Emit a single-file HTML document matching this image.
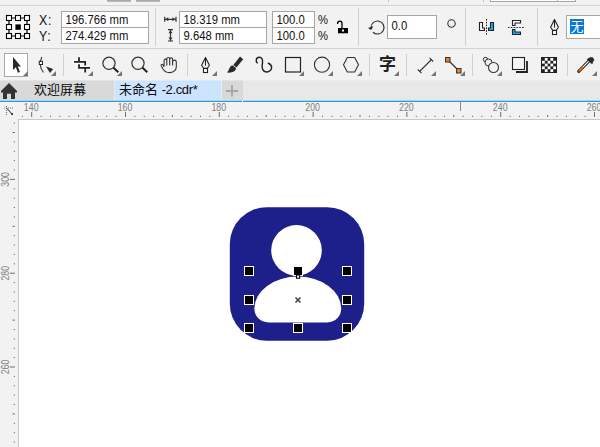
<!DOCTYPE html>
<html lang="zh">
<head>
<meta charset="utf-8">
<title>CorelDRAW</title>
<style>
html,body{margin:0;padding:0;}
body{width:600px;height:447px;overflow:hidden;background:#f2f2f2;position:relative;
 font-family:"Liberation Sans","Noto Sans CJK SC",sans-serif;font-size:11.3px;color:#111;}
.abs{position:absolute;}
.hline{position:absolute;left:0;width:600px;height:1px;background:#d2d2d2;}
.vsep{position:absolute;width:1px;background:#d0d0d0;}
.inp{position:absolute;background:#fff;border:1px solid #a6a6a6;box-sizing:border-box;}
.txt{position:absolute;white-space:nowrap;line-height:1;}
.t{transform:scaleY(1.15);transform-origin:0 84.6%;}
.tri{position:absolute;width:0;height:0;margin:-1px 0 0 -1px;border-left:5px solid transparent;border-bottom:5px solid #757575;}
svg{position:absolute;overflow:visible;}
</style>
</head>
<body>

<!-- top strip remnants -->
<div class="abs" style="left:107px;top:0;width:24px;height:2px;background:linear-gradient(#ababab 0,#ababab 60%,#d0d0d0 100%);"></div>
<div class="abs" style="left:136px;top:0;width:24px;height:2px;background:linear-gradient(#ababab 0,#ababab 60%,#d0d0d0 100%);"></div>
<div class="abs" style="left:490px;top:0;width:86px;height:2px;background:#fff;border:1px solid #a6a6a6;border-top:none;box-sizing:border-box;"></div>
<div class="abs" style="left:557px;top:0;width:1px;height:2px;background:#b0b0b0;"></div>
<div class="abs" style="left:388px;top:0;width:1px;height:2px;background:#c0c0c0;"></div>
<div class="abs" style="left:483px;top:0;width:1px;height:2px;background:#c0c0c0;"></div>
<div class="hline" style="top:5px;"></div>

<!-- property bar -->
<svg style="left:5px;top:14px;" width="26" height="26" viewBox="0 0 26 26">
 <rect x="1" y="1" width="24" height="24" fill="#fafafa"/>
 <path d="M7 4H10M16 4H19M7 22H10M16 22H19M4 7V10M4 16V19M22 7V10M22 16V19" stroke="#000" stroke-width="1.2" fill="none"/>
 <g fill="#fff" stroke="#000" stroke-width="1.1">
  <rect x="1.5" y="1.5" width="5" height="5"/><rect x="10.5" y="1.5" width="5" height="5"/><rect x="19.5" y="1.5" width="5" height="5"/>
  <rect x="1.5" y="10.5" width="5" height="5"/><rect x="19.5" y="10.5" width="5" height="5"/>
  <rect x="1.5" y="19.5" width="5" height="5"/><rect x="10.5" y="19.5" width="5" height="5"/><rect x="19.5" y="19.5" width="5" height="5"/>
 </g>
 <rect x="10.4" y="10.4" width="5.4" height="5.4" fill="#000"/>
</svg>
<div class="txt t" style="left:39px;top:14.5px;font-size:12.3px;letter-spacing:0.8px;">X:</div>
<div class="txt t" style="left:39px;top:30.5px;font-size:12.3px;letter-spacing:0.8px;">Y:</div>
<div class="inp" style="left:61px;top:11px;width:88px;height:33px;"></div>
<div class="abs" style="left:61px;top:27px;width:88px;height:1px;background:#a6a6a6;"></div>
<div class="txt t" style="left:65.5px;top:15.4px;">196.766 mm</div>
<div class="txt t" style="left:65.5px;top:31.4px;">274.429 mm</div>
<div class="vsep" style="left:155px;top:8px;height:38px;"></div>

<svg style="left:164px;top:16px;" width="14" height="7" viewBox="0 0 14 7">
 <path d="M0.7 0.8V5.8M12 0.8V5.8M1 3.3H12" stroke="#333" stroke-width="1.2" fill="none"/>
 <path d="M1.3 3.3L4.3 1.3V5.3ZM11.4 3.3L8.4 1.3V5.3Z" fill="#333"/>
</svg>
<svg style="left:166px;top:29px;" width="9" height="14" viewBox="0 0 9 14">
 <path d="M2 0.6H7M2 12H7M4.5 1V12" stroke="#333" stroke-width="1.2" fill="none"/>
 <path d="M4.5 1.2L2.5 4.2H6.5ZM4.5 11.4L2.5 8.4H6.5Z" fill="#333"/>
</svg>
<div class="inp" style="left:179px;top:11px;width:88px;height:33px;"></div>
<div class="abs" style="left:179px;top:27px;width:88px;height:1px;background:#a6a6a6;"></div>
<div class="txt t" style="left:183.5px;top:15.4px;">18.319 mm</div>
<div class="txt t" style="left:183.5px;top:31.4px;">9.648 mm</div>

<div class="inp" style="left:272px;top:11px;width:43px;height:33px;"></div>
<div class="abs" style="left:272px;top:27px;width:43px;height:1px;background:#a6a6a6;"></div>
<div class="txt t" style="left:276.5px;top:15.4px;">100.0</div>
<div class="txt t" style="left:276.5px;top:31.4px;">100.0</div>
<div class="txt t" style="left:318px;top:15.4px;">%</div>
<div class="txt t" style="left:318px;top:31.4px;">%</div>
<svg style="left:336px;top:20px;" width="13" height="14" viewBox="0 0 13 14">
 <path d="M1.6 4V3.4A2.2 2.2 0 0 1 6 3.4V8" stroke="#000" stroke-width="1.3" fill="none"/>
 <rect x="2" y="8" width="10" height="5.3" fill="#000"/>
 <rect x="6" y="9.5" width="2" height="2" fill="#fff"/>
</svg>
<div class="vsep" style="left:358px;top:8px;height:38px;"></div>

<svg style="left:368px;top:18px;" width="18" height="18" viewBox="0 0 18 18">
 <path d="M3 9.5A6.5 6.5 0 1 1 5 14.2" stroke="#333" stroke-width="1.2" fill="none"/>
 <path d="M0 10L5.3 8.3L3.2 12Z" fill="#222"/>
</svg>
<div class="inp" style="left:387px;top:15px;width:50px;height:24px;"></div>
<div class="txt t" style="left:391.5px;top:21.4px;">0.0</div>
<svg style="left:446px;top:18px;" width="11" height="11" viewBox="0 0 11 11"><circle cx="5.5" cy="5.5" r="3.7" fill="none" stroke="#333" stroke-width="1.1"/></svg>
<div class="vsep" style="left:465px;top:8px;height:38px;"></div>

<!-- mirror H -->
<svg style="left:478px;top:18px;" width="18" height="18" viewBox="0 0 18 18">
 <path d="M1.5 4.5H4.5V10H6.5V12.5H1.5Z" fill="#fff" stroke="#222" stroke-width="1.1"/>
 <path d="M15.5 4.5H12.5V10H10.5V12.5H15.5Z" fill="#1eaaf0" stroke="#222" stroke-width="1.1"/>
 <path d="M8.5 1V17" stroke="#222" stroke-width="1" stroke-dasharray="1.6 1.2"/>
</svg>
<!-- mirror V -->
<svg style="left:507px;top:19px;" width="18" height="18" viewBox="0 0 18 18">
 <path d="M5.5 1.5H13.5V4H8V6.5H5.5Z" fill="#fff" stroke="#222" stroke-width="1.1"/>
 <path d="M5.5 15.5H13.5V13H8V10.5H5.5Z" fill="#1eaaf0" stroke="#222" stroke-width="1.1"/>
 <path d="M1 8.5H17" stroke="#222" stroke-width="1" stroke-dasharray="1.6 1.2"/>
</svg>
<div class="vsep" style="left:537px;top:8px;height:38px;"></div>
<!-- pen nib -->
<svg style="left:549px;top:18px;" width="12" height="18" viewBox="0 0 12 18">
 <path d="M5.5 1.4L1.6 9.3L3.6 12.3H7.4L9.4 9.3Z" fill="#f4f4f4" stroke="#222" stroke-width="1.1" stroke-linejoin="round"/>
 <path d="M5.5 1.5V9.6" stroke="#222" stroke-width="1.1"/>
 <rect x="3.5" y="12.5" width="4" height="4" fill="#fff" stroke="#222" stroke-width="1.1"/>
</svg>
<div class="inp" style="left:566px;top:15px;width:40px;height:24px;"></div>
<div class="abs" style="left:570px;top:19px;width:14px;height:15px;background:#0a78d7;"></div>
<div class="txt" style="left:570.5px;top:20px;font-size:13px;color:#fff;">无</div>

<div class="hline" style="top:48px;"></div>

<!-- toolbox -->
<div class="abs" style="left:4px;top:53px;width:24px;height:24px;background:#fff;border:1px solid #a8a8a8;box-sizing:border-box;"></div>
<svg style="left:12px;top:57px;" width="11" height="17" viewBox="0 0 11 17">
 <path d="M1 0V13L3.8 10.3L6 15.8L8 14.9L5.8 9.6H9Z" fill="#2a2a2a"/>
</svg>
<div class="tri" style="left:23.5px;top:72px;"></div>

<!-- shape tool -->
<svg style="left:37px;top:56px;" width="20" height="21" viewBox="0 0 20 21">
 <path d="M4.8 1C2.5 6 3 12 6.5 16.5" stroke="#333" stroke-width="1.1" fill="none"/>
 <rect x="2.3" y="5.3" width="3.2" height="3.2" fill="#fff" stroke="#222" stroke-width="1"/>
 <path d="M9 10.5L16.2 13L13 17Z" fill="#2a2a2a"/>
</svg>
<div class="tri" style="left:52px;top:72px;"></div>
<div class="vsep" style="left:63px;top:54px;height:22px;"></div>

<!-- crop -->
<svg style="left:73px;top:56px;" width="19" height="18" viewBox="0 0 19 18">
 <path d="M6 1.2V5.9M1 5.9H13.1M12.2 5.9V9.6" stroke="#fafafa" stroke-width="3.6" fill="none" stroke-linecap="square"/>
 <path d="M6 1.2V5.9M1 5.9H13.1M12.2 5.9V9.6" stroke="#222" stroke-width="1.8" fill="none"/>
 <path d="M6 8.3V11.8M5.1 11.8H17M12.2 11.8V16.6" stroke="#fafafa" stroke-width="3.6" fill="none"/>
 <path d="M6 8.3V11.8M5.1 11.8H17M12.2 11.8V16.6" stroke="#222" stroke-width="1.8" fill="none"/>
</svg>
<div class="tri" style="left:89px;top:72px;"></div>

<!-- zoom 1 -->
<svg style="left:101px;top:55px;" width="20" height="20" viewBox="0 0 20 20">
 <circle cx="8" cy="8.3" r="6.1" fill="none" stroke="#333" stroke-width="1.2"/>
 <path d="M12.5 12.8L17.3 17.3" stroke="#222" stroke-width="2"/>
</svg>
<div class="tri" style="left:117.6px;top:72px;"></div>
<!-- zoom 2 -->
<svg style="left:130px;top:55px;" width="20" height="20" viewBox="0 0 20 20">
 <circle cx="8" cy="8.3" r="6.1" fill="none" stroke="#333" stroke-width="1.2"/>
 <path d="M12.5 12.8L17.3 17.3" stroke="#222" stroke-width="2"/>
</svg>
<!-- hand -->
<svg style="left:160px;top:57px;" width="18" height="17" viewBox="0 0 18 17">
 <path d="M4.1 9.8V3.5A1.35 1.35 0 0 1 6.8 3.5V8.5M6.8 3.5V2A1.45 1.45 0 0 1 9.7 2V8.5M9.7 2.3A1.45 1.45 0 0 1 12.6 2.3V8.5M12.6 5A1.85 1.85 0 0 1 16.3 5V10C16.3 13.5 13 15.6 9.3 15.6C6 15.6 4.3 14 3 12L1.3 9C0.6 7.6 2 6.6 3 7.8L4.1 9.8" fill="none" stroke="#333" stroke-width="1.1" stroke-linejoin="round"/>
</svg>
<div class="vsep" style="left:187px;top:54px;height:22px;"></div>

<!-- pen -->
<svg style="left:200px;top:56px;" width="12" height="18" viewBox="0 0 12 18">
 <path d="M5.5 1.4L1.6 9.3L3.6 12.3H7.4L9.4 9.3Z" fill="#f4f4f4" stroke="#222" stroke-width="1.1" stroke-linejoin="round"/>
 <path d="M5.5 1.5V9.6" stroke="#222" stroke-width="1.1"/>
 <rect x="3.5" y="12.5" width="4" height="4" fill="#fff" stroke="#222" stroke-width="1.1"/>
</svg>
<div class="tri" style="left:213px;top:72px;"></div>
<!-- brush -->
<svg style="left:226px;top:56px;" width="18" height="18" viewBox="0 0 18 18">
 <path d="M7.4 8.9L14 0.6L17.2 3.2L10.5 11.5Z" fill="#2a2a2a"/>
 <path d="M7 9.6L9.9 12.1C10.3 15.2 6.5 17.2 0.8 16.6C3 15.4 2.8 12.4 4.2 10.8C5.2 9.6 6.3 9.3 7 9.6Z" fill="#2a2a2a"/>
</svg>
<!-- smart draw hook -->
<svg style="left:255px;top:56px;" width="19" height="19" viewBox="0 0 19 19">
 <path d="M2.3 6.8C0.5 5.5 0.8 1.2 4.3 1.2C7 1.2 7.8 3.5 7.5 7C7.2 9.5 6.5 11 7.6 13.2C8.8 15.6 10.5 16 11.8 16C14.5 16 16.6 13.8 16.6 11.4C16.6 9.5 15.2 8 13.3 7.3" fill="none" stroke="#222" stroke-width="1.45" stroke-linecap="round"/>
</svg>
<!-- rectangle -->
<svg style="left:284px;top:56px;" width="18" height="17" viewBox="0 0 18 17"><rect x="1.5" y="1.5" width="15" height="14.5" fill="none" stroke="#222" stroke-width="1.2"/></svg>
<div class="tri" style="left:300px;top:72px;"></div>
<!-- ellipse -->
<svg style="left:313px;top:56px;" width="18" height="18" viewBox="0 0 18 18"><circle cx="9" cy="8.7" r="7.6" fill="none" stroke="#333" stroke-width="1.1"/></svg>
<div class="tri" style="left:329px;top:72px;"></div>
<!-- polygon -->
<svg style="left:342px;top:56px;" width="18" height="18" viewBox="0 0 18 18"><path d="M1.5 8.7L5.3 1.5H12.7L16.5 8.7L12.7 16H5.3Z" fill="none" stroke="#333" stroke-width="1.1"/></svg>
<div class="tri" style="left:358px;top:72px;"></div>
<div class="vsep" style="left:369px;top:54px;height:22px;"></div>
<!-- text -->
<div class="txt" style="left:379px;top:56px;font-size:17px;font-weight:700;color:#222;">字</div>
<div class="tri" style="left:395px;top:72px;"></div>
<div class="vsep" style="left:406px;top:54px;height:22px;"></div>
<!-- dimension -->
<svg style="left:416.5px;top:56.5px;" width="18" height="18" viewBox="0 0 18 18">
 <path d="M2.5 14.5L14.5 2.5" stroke="#333" stroke-width="1.1"/>
 <path d="M0.8 12.5L4.5 16.2M12.5 0.8L16.2 4.5" stroke="#333" stroke-width="1.1"/>
</svg>
<div class="tri" style="left:432px;top:72px;"></div>
<!-- connector -->
<svg style="left:444.2px;top:55.6px;" width="19" height="19" viewBox="0 0 19 19">
 <path d="M4 4L14.5 14.5" stroke="#333" stroke-width="1.2"/>
 <rect x="1.5" y="1.5" width="4.5" height="4.5" fill="#f57c14" stroke="#333" stroke-width="1"/>
 <rect x="12.5" y="12.5" width="4.5" height="4.5" fill="#f57c14" stroke="#333" stroke-width="1"/>
</svg>
<div class="tri" style="left:461px;top:72px;"></div>
<div class="vsep" style="left:472px;top:54px;height:22px;"></div>
<!-- blend -->
<svg style="left:482px;top:56px;" width="20" height="19" viewBox="0 0 20 19">
 <circle cx="3.5" cy="3.5" r="2.2" fill="#f4f4f4" stroke="#333" stroke-width="1"/>
 <circle cx="6.5" cy="6.5" r="3.5" fill="#f4f4f4" stroke="#333" stroke-width="1"/>
 <circle cx="11.5" cy="11.5" r="5" fill="#f4f4f4" stroke="#333" stroke-width="1.1"/>
</svg>
<div class="tri" style="left:498px;top:72px;"></div>
<!-- drop shadow -->
<svg style="left:511px;top:56px;" width="19" height="19" viewBox="0 0 19 19">
 <path d="M16 5V16H5" stroke="#222" stroke-width="1.8" fill="none"/>
 <rect x="1.5" y="1.5" width="12" height="12" fill="#f6f6f6" stroke="#222" stroke-width="1.1"/>
</svg>
<!-- transparency checker -->
<svg style="left:541px;top:57px;" width="16" height="16" viewBox="0 0 16 16">
 <rect x="0" y="0" width="16" height="16" fill="#222"/>
 <g fill="#fff"><rect x="3.8" y="1.0" width="2.8" height="2.8"/><rect x="9.4" y="1.0" width="2.8" height="2.8"/><rect x="1.0" y="3.8" width="2.8" height="2.8"/><rect x="6.6" y="3.8" width="2.8" height="2.8"/><rect x="12.2" y="3.8" width="2.8" height="2.8"/><rect x="3.8" y="6.6" width="2.8" height="2.8"/><rect x="9.4" y="6.6" width="2.8" height="2.8"/><rect x="1.0" y="9.4" width="2.8" height="2.8"/><rect x="6.6" y="9.4" width="2.8" height="2.8"/><rect x="12.2" y="9.4" width="2.8" height="2.8"/><rect x="3.8" y="12.2" width="2.8" height="2.8"/><rect x="9.4" y="12.2" width="2.8" height="2.8"/></g>
</svg>
<div class="vsep" style="left:567px;top:54px;height:22px;"></div>
<!-- eyedropper -->
<svg style="left:576px;top:56px;" width="20" height="19" viewBox="0 0 20 19">
 <path d="M2.7 15.3L12.8 5.2" stroke="#222" stroke-width="3.1" stroke-linecap="round"/>
 <path d="M3.6 14.4L12.8 5.2" stroke="#fff" stroke-width="1.1"/>
 <path d="M3 15L6.8 11.2" stroke="#f26a0e" stroke-width="1.5" stroke-linecap="round"/>
 <path d="M11 3.5L11.8 2.6L14.8 1.2L16.6 1.4L17.9 3.2V4.8L16.8 5.7V7.2L15.8 8Z" fill="#2a2a2a" stroke="#2a2a2a" stroke-width="0.3" stroke-linejoin="round"/>
</svg>
<div class="tri" style="left:593px;top:72px;"></div>

<!-- tab bar -->
<div class="abs" style="left:0;top:80px;width:600px;height:21px;background:#e8e8e8;"></div>
<div class="abs" style="left:0;top:80px;width:114px;height:21px;background:#d9d9d9;"></div>
<svg style="left:1px;top:82.8px;" width="16" height="16" viewBox="0 0 16 16">
 <path d="M8 0L0 8V9.4H2V16H6V10.7H10V16H14V9.4H16V8Z" fill="#333"/>
</svg>
<div class="txt" style="left:34px;top:83.4px;font-size:13px;color:#0a0a0a;">欢迎屏幕</div>
<div class="abs" style="left:114px;top:80px;width:107px;height:21px;background:#cde4fe;"></div>
<div class="txt" style="left:119px;top:83.4px;font-size:13px;color:#0a0a0a;">未命名 <span style="letter-spacing:-0.36px;">-2.cdr*</span></div>
<div class="abs" style="left:222px;top:80px;width:21px;height:21px;background:#d9d9d9;"></div>
<div class="abs" style="left:242px;top:100px;width:1px;height:2px;background:#e8f2fa;z-index:2;"></div>
<svg style="left:226px;top:85px;" width="12" height="12" viewBox="0 0 12 12"><path d="M6 0V11.5M0 6H12" stroke="#a6a6a6" stroke-width="1.9"/></svg>
<div class="abs" style="left:0;top:80px;width:600px;height:1px;background:#f0f0f0;opacity:0.5;"></div>
<div class="abs" style="left:114px;top:81px;width:1px;height:19px;background:#e6ecf2;"></div>
<div class="abs" style="left:221px;top:81px;width:1px;height:19px;background:#e6ecf2;"></div>
<div class="abs" style="left:0;top:100px;width:600px;height:2px;background:linear-gradient(#b4d2e8 0,#b4d2e8 50%,#1e9ee8 50%,#1e9ee8 100%);"></div>

<!-- rulers + canvas -->
<div class="abs" style="left:0;top:102px;width:600px;height:345px;background:#f2f2f2;"></div>
<div class="abs" style="left:18px;top:119px;width:582px;height:328px;background:#fff;border-left:1px solid #c8c8c8;border-top:1px solid #c8c8c8;box-sizing:border-box;"></div>
<svg id="rulers" style="left:0;top:102px;" width="600" height="345" viewBox="0 0 600 345">
<path d="M22.3 13.799999999999997V15M31.7 10V15M41.1 13.799999999999997V15M50.5 13.799999999999997V15M59.8 13.799999999999997V15M69.2 13.799999999999997V15M78.6 12.799999999999997V15M88.0 13.799999999999997V15M97.4 13.799999999999997V15M106.7 13.799999999999997V15M116.1 13.799999999999997V15M125.5 10V15M134.9 13.799999999999997V15M144.3 13.799999999999997V15M153.6 13.799999999999997V15M163.0 13.799999999999997V15M172.4 12.799999999999997V15M181.8 13.799999999999997V15M191.2 13.799999999999997V15M200.5 13.799999999999997V15M209.9 13.799999999999997V15M219.3 10V15M228.7 13.799999999999997V15M238.1 13.799999999999997V15M247.4 13.799999999999997V15M256.8 13.799999999999997V15M266.2 12.799999999999997V15M275.6 13.799999999999997V15M285.0 13.799999999999997V15M294.3 13.799999999999997V15M303.7 13.799999999999997V15M313.1 10V15M322.5 13.799999999999997V15M331.9 13.799999999999997V15M341.2 13.799999999999997V15M350.6 13.799999999999997V15M360.0 12.799999999999997V15M369.4 13.799999999999997V15M378.8 13.799999999999997V15M388.1 13.799999999999997V15M397.5 13.799999999999997V15M406.9 10V15M416.3 13.799999999999997V15M425.7 13.799999999999997V15M435.0 13.799999999999997V15M444.4 13.799999999999997V15M453.8 12.799999999999997V15M463.2 13.799999999999997V15M472.6 13.799999999999997V15M481.9 13.799999999999997V15M491.3 13.799999999999997V15M500.7 10V15M510.1 13.799999999999997V15M519.5 13.799999999999997V15M528.8 13.799999999999997V15M538.2 13.799999999999997V15M547.6 12.799999999999997V15M557.0 13.799999999999997V15M566.4 13.799999999999997V15M575.7 13.799999999999997V15M585.1 13.799999999999997V15M594.5 10V15" stroke="#6e6e6e" stroke-width="1" fill="none"/>
<text transform="translate(31.2 8.8) scale(1 1.14)" font-size="8.8" fill="#808080" text-anchor="middle" font-family="Liberation Sans, sans-serif">140</text>
<text transform="translate(125.0 8.8) scale(1 1.14)" font-size="8.8" fill="#808080" text-anchor="middle" font-family="Liberation Sans, sans-serif">160</text>
<text transform="translate(218.8 8.8) scale(1 1.14)" font-size="8.8" fill="#808080" text-anchor="middle" font-family="Liberation Sans, sans-serif">180</text>
<text transform="translate(312.6 8.8) scale(1 1.14)" font-size="8.8" fill="#808080" text-anchor="middle" font-family="Liberation Sans, sans-serif">200</text>
<text transform="translate(406.4 8.8) scale(1 1.14)" font-size="8.8" fill="#808080" text-anchor="middle" font-family="Liberation Sans, sans-serif">220</text>
<text transform="translate(500.2 8.8) scale(1 1.14)" font-size="8.8" fill="#808080" text-anchor="middle" font-family="Liberation Sans, sans-serif">240</text>
<text transform="translate(594.0 8.8) scale(1 1.14)" font-size="8.8" fill="#808080" text-anchor="middle" font-family="Liberation Sans, sans-serif">260</text>
<path d="M13.8 340.0H15M13.8 330.7H15M13.8 321.3H15M12.5 311.9H15M13.8 302.5H15M13.8 293.1H15M13.8 283.8H15M13.8 274.4H15M10 265.0H15M13.8 255.6H15M13.8 246.2H15M13.8 236.9H15M13.8 227.5H15M12.5 218.1H15M13.8 208.7H15M13.8 199.3H15M13.8 190.0H15M13.8 180.6H15M10 171.2H15M13.8 161.8H15M13.8 152.4H15M13.8 143.1H15M13.8 133.7H15M12.5 124.3H15M13.8 114.9H15M13.8 105.5H15M13.8 96.2H15M13.8 86.8H15M10 77.4H15M13.8 68.0H15M13.8 58.6H15M13.8 49.3H15M13.8 39.9H15M12.5 30.5H15M13.8 21.1H15" stroke="#6e6e6e" stroke-width="1" fill="none"/>
<text transform="translate(9 265.0) rotate(-90) scale(1 1.14)" font-size="8.8" fill="#808080" text-anchor="middle" font-family="Liberation Sans, sans-serif">260</text>
<text transform="translate(9 171.2) rotate(-90) scale(1 1.14)" font-size="8.8" fill="#808080" text-anchor="middle" font-family="Liberation Sans, sans-serif">280</text>
<text transform="translate(9 77.4) rotate(-90) scale(1 1.14)" font-size="8.8" fill="#808080" text-anchor="middle" font-family="Liberation Sans, sans-serif">300</text>
<path d="M460.5 -1V9" stroke="#8a8a8a" stroke-width="1"/>
<path d="M6.5 6L12 12" stroke="#444" stroke-width="1.1"/><rect x="11" y="11" width="2" height="2" fill="#444"/><path d="M4 6H14M6.5 4V14" stroke="#777" stroke-width="1.2" stroke-dasharray="1 1" fill="none"/>
</svg>

<!-- artwork -->
<svg style="left:0;top:0;" width="600" height="447" viewBox="0 0 600 447">
 <rect x="229.8" y="207.2" width="134.4" height="133.5" rx="37" ry="37" fill="#1d208a"/>
 <circle cx="296.5" cy="250.3" r="25.3" fill="#fff"/>
 <path d="M254.4 308.6A43.4 32 0 0 1 341.2 308.6C341.2 316.5 335.5 322.4 327 322.4H268.6C260.1 322.4 254.4 316.5 254.4 308.6Z" fill="#fff"/>
 <g fill="#000" stroke="#fff" stroke-width="1">
  <rect x="244.5" y="266.5" width="9" height="9"/><rect x="293.5" y="266.5" width="9" height="9"/><rect x="342.5" y="266.5" width="9" height="9"/>
  <rect x="244.5" y="295.5" width="9" height="9"/><rect x="342.5" y="295.5" width="9" height="9"/>
  <rect x="244.5" y="323.5" width="9" height="9"/><rect x="293.5" y="323.5" width="9" height="9"/><rect x="342.5" y="323.5" width="9" height="9"/>
 </g>
 <rect x="296.5" y="275" width="3.2" height="3.2" fill="#fff" stroke="#000" stroke-width="1.1"/>
 <path d="M295.5 297.5L300.5 302.5M300.5 297.5L295.5 302.5" stroke="#444" stroke-width="1.6"/>
</svg>
</body>
</html>
